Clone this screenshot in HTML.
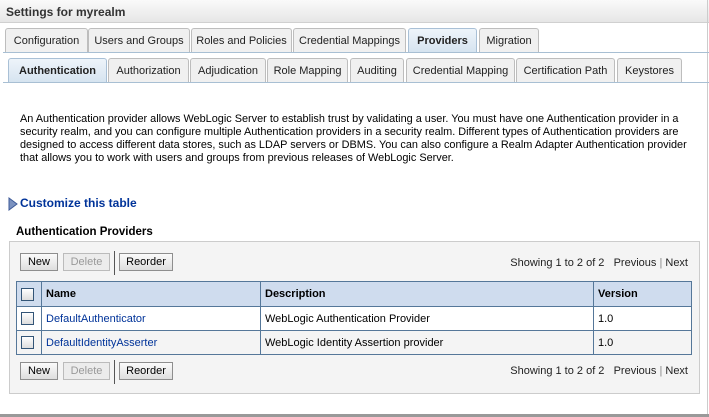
<!DOCTYPE html>
<html><head><style>
*{margin:0;padding:0;box-sizing:border-box}
body{width:709px;height:417px;background:#fff;font-family:"Liberation Sans",sans-serif;font-size:11px;color:#000;position:relative;overflow:hidden}
.a{position:absolute}
.hdr{left:0;top:0;width:709px;height:23px;background:linear-gradient(#fafafa,#e6e6e6);border-bottom:1px solid #d0d0d0;font-weight:bold;font-size:12px;color:#333;padding:5px 0 0 6px}
.tab{position:absolute;height:24px;border:1px solid #bdbdbd;border-bottom:none;border-radius:3px 3px 0 0;background:#f0f0f0;font-size:11px;text-align:center;padding-top:6px;color:#222;white-space:nowrap}
.sel{background:linear-gradient(#eef4fa,#d6e4f0);border-color:#a9c0d6;font-weight:bold}
.line{position:absolute;left:3px;width:706px;height:1px;background:#a8bfd3}
.p{left:20px;top:113px;line-height:13px;white-space:nowrap;font-size:10.9px}
.btn{position:absolute;height:18px;border:1px solid #8e8e8e;background:linear-gradient(#fbfbfb,#dedede);font-size:11px;text-align:center;padding-top:2px}
.dis{color:#999;border-color:#bbb;background:#ececec}
table{position:absolute;left:16px;top:281px;width:676px;border-collapse:collapse;font-size:11px}
td,th{border:1px solid #557799;height:24px;text-align:left;padding-left:4px}
th{background:#cfdcee;font-weight:bold;height:25px}
.cb{width:13px;height:13px;border:1px solid #335577;background:linear-gradient(#fff,#ddd);display:inline-block;vertical-align:middle}
a{color:#003399;text-decoration:none}
.show{right:21px;font-size:11px;color:#222}
</style></head><body>
<div class="a hdr">Settings for myrealm</div>
<div class="a" style="right:1px;top:0;width:1px;height:417px;background:#ccc"></div>
<div class="tab" style="left:5px;top:28px;width:83px">Configuration</div>
<div class="tab" style="left:88px;top:28px;width:102px">Users and Groups</div>
<div class="tab" style="left:191px;top:28px;width:101px">Roles and Policies</div>
<div class="tab" style="left:293px;top:28px;width:113px">Credential Mappings</div>
<div class="tab sel" style="left:408px;top:28px;width:69px">Providers</div>
<div class="tab" style="left:479px;top:28px;width:60px">Migration</div>
<div class="line" style="top:52px"></div>
<div class="tab sel" style="left:8px;top:58px;width:99px">Authentication</div>
<div class="tab" style="left:108px;top:58px;width:81px">Authorization</div>
<div class="tab" style="left:190px;top:58px;width:76px">Adjudication</div>
<div class="tab" style="left:267px;top:58px;width:81px">Role Mapping</div>
<div class="tab" style="left:350px;top:58px;width:54px">Auditing</div>
<div class="tab" style="left:406px;top:58px;width:109px">Credential Mapping</div>
<div class="tab" style="left:516px;top:58px;width:99px">Certification Path</div>
<div class="tab" style="left:617px;top:58px;width:65px">Keystores</div>
<div class="line" style="top:82px"></div>
<div class="a p">An Authentication provider allows WebLogic Server to establish trust by validating a user. You must have one Authentication provider in a<br>security realm, and you can configure multiple Authentication providers in a security realm. Different types of Authentication providers are<br>designed to access different data stores, such as LDAP servers or DBMS. You can also configure a Realm Adapter Authentication provider<br>that allows you to work with users and groups from previous releases of WebLogic Server.</div>
<svg class="a" style="left:8px;top:197px" width="10" height="14"><polygon points="1,1 9,7 1,13" fill="#7c93c0" stroke="#3d5a98"/></svg>
<div class="a" style="left:20px;top:196px;font-weight:bold;font-size:12px;color:#003399">Customize this table</div>
<div class="a" style="left:16px;top:226px;font-weight:bold;font-size:11.5px">Authentication Providers</div>
<div class="a" style="left:9px;top:241px;width:691px;height:153px;background:#f4f4f4;border:1px solid #ccc"></div>
<div class="btn" style="left:20px;top:253px;width:38px">New</div>
<div class="btn dis" style="left:63px;top:253px;width:47px">Delete</div>
<div class="a" style="left:114px;top:251px;width:1px;height:24px;background:#555"></div>
<div class="btn" style="left:119px;top:253px;width:54px">Reorder</div>
<div class="a show" style="top:257px">Showing 1 to 2 of 2 &nbsp; Previous <span style="color:#888">|</span> Next</div>
<table>
<tr><th style="width:25px"><span class="cb"></span></th><th style="width:219px">Name</th><th style="width:333px">Description</th><th>Version</th></tr>
<tr style="background:#fff"><td><span class="cb"></span></td><td><a>DefaultAuthenticator</a></td><td>WebLogic Authentication Provider</td><td>1.0</td></tr>
<tr style="background:#f4f4f4"><td><span class="cb"></span></td><td><a>DefaultIdentityAsserter</a></td><td>WebLogic Identity Assertion provider</td><td>1.0</td></tr>
</table>
<div class="btn" style="left:20px;top:362px;width:38px">New</div>
<div class="btn dis" style="left:63px;top:362px;width:47px">Delete</div>
<div class="a" style="left:114px;top:360px;width:1px;height:24px;background:#555"></div>
<div class="btn" style="left:119px;top:362px;width:54px">Reorder</div>
<div class="a show" style="top:365px">Showing 1 to 2 of 2 &nbsp; Previous <span style="color:#888">|</span> Next</div>
<div class="a" style="left:0;top:414px;width:709px;height:3px;background:#999"></div>
</body></html>
